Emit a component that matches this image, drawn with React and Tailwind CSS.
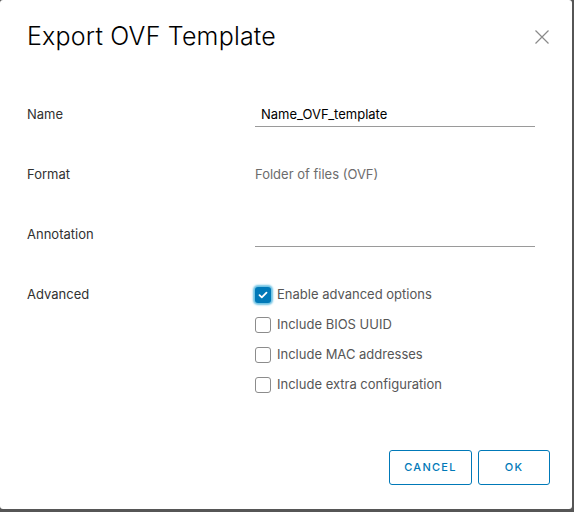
import React from "react";

function Check({ checked, label }) {
  return (
    <label className="flex items-center h-[30px]">
      {checked ? (
        <span className="w-4 h-4 rounded-[3px] bg-[#0079b8] flex items-center justify-center shadow-[0_0_2px_2px_#6bc1e3]">
          <svg width="10" height="8" viewBox="0 0 10 8">
            <path d="M1.5 4.2 L3.8 6.3 L8.5 1.6" stroke="white" strokeWidth="1.8" fill="none" strokeLinecap="round" strokeLinejoin="round" />
          </svg>
        </span>
      ) : (
        <span className="w-4 h-4 rounded-[3px] border border-[#8c8c8c] bg-white" />
      )}
      <span className="ml-[6px] text-[13px] text-[#565656]">{label}</span>
    </label>
  );
}

export default function App() {
  return (
    <div className="w-[574px] h-[512px] bg-[#565656] font-['Inter',_sans-serif]">
      <div className="w-[572px] h-[509px] bg-white rounded-[3px] flex flex-col">
        <div className="flex justify-between pl-[27px] pr-[23px] pt-[22px] h-[72px] items-start">
          <h1 className="text-[25px] font-light text-[#000] leading-[28px] tracking-[0.2px]">Export OVF Template</h1>
          <svg width="14" height="14" viewBox="0 0 14 14" className="mt-[8px]">
            <path d="M0.5 0.5 L13.5 13.5 M13.5 0.5 L0.5 13.5" stroke="#8a8a8a" strokeWidth="1.2" />
          </svg>
        </div>
        <div className="pl-[27px] pt-[28px] text-[13px] text-[#313131]">
          <div className="flex items-center h-[30px]">
            <div className="w-[228px]">Name</div>
            <div className="w-[280px] h-[24px] border-b border-[#9a9a9a] pl-[6px] flex items-center text-[#000]">Name_OVF_template</div>
          </div>
          <div className="flex items-center h-[30px] mt-[30px]">
            <div className="w-[228px]">Format</div>
            <div className="text-[#6c6c6c]">Folder of files (OVF)</div>
          </div>
          <div className="flex items-center h-[30px] mt-[30px]">
            <div className="w-[228px]">Annotation</div>
            <div className="w-[280px] h-[24px] border-b border-[#9a9a9a]" />
          </div>
          <div className="flex items-start mt-[30px]">
            <div className="w-[228px] h-[30px] flex items-center">Advanced</div>
            <div className="flex flex-col">
              <Check checked label="Enable advanced options" />
              <Check label="Include BIOS UUID" />
              <Check label="Include MAC addresses" />
              <Check label="Include extra configuration" />
            </div>
          </div>
        </div>
        <div className="flex-1" />
        <div className="flex justify-end gap-[6px] pr-[22px] pb-[24px]">
          <button className="w-[83px] h-[35px] border border-[#0079b8] rounded-[3px] text-[#0079b8] text-[11px] font-medium tracking-[1.3px]">CANCEL</button>
          <button className="w-[72px] h-[35px] border border-[#0079b8] rounded-[3px] text-[#0079b8] text-[11px] font-medium tracking-[1.3px]">OK</button>
        </div>
      </div>
    </div>
  );
}
